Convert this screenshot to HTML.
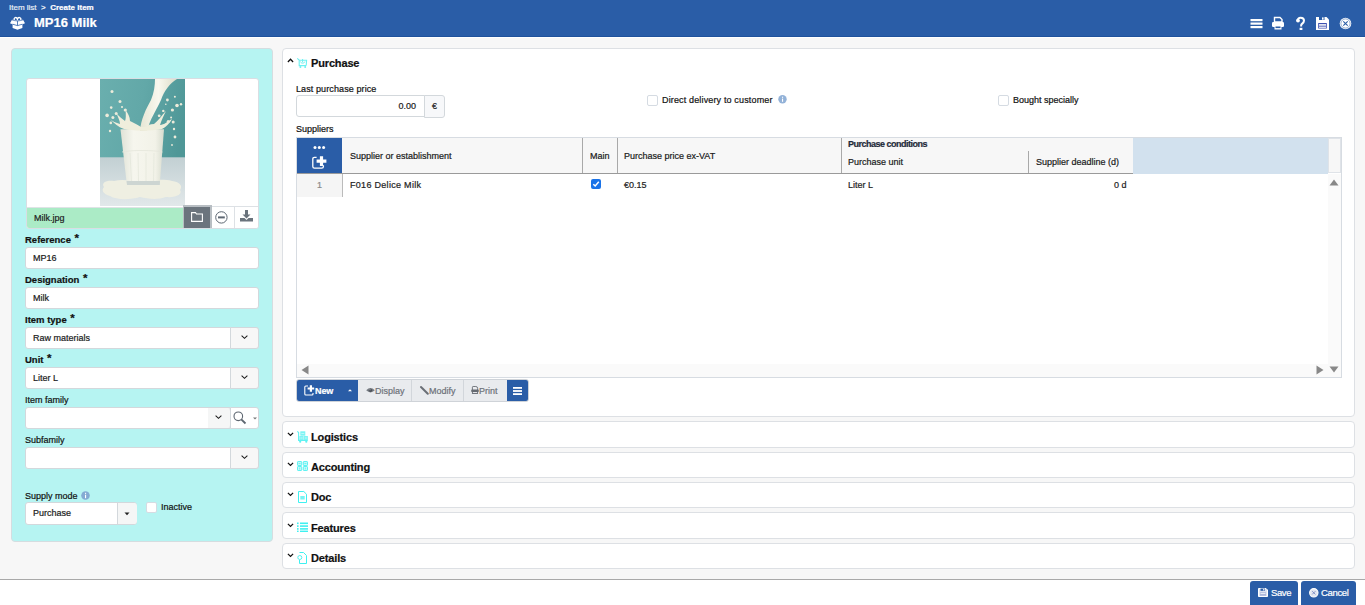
<!DOCTYPE html>
<html><head><meta charset="utf-8">
<style>
*{box-sizing:border-box;margin:0;padding:0}
.a{-webkit-text-stroke:0.2px currentColor}
html,body{width:1365px;height:605px;overflow:hidden;background:#f7f7f7;font-family:"Liberation Sans",sans-serif;color:#1a1a1a;position:relative}
.a{position:absolute}
svg{position:absolute;overflow:visible}
.hdr{left:0;top:0;width:1365px;height:37px;background:#2a5da7;border-bottom:1px solid #1f529c}
.hdrw{left:0;top:37px;width:1365px;height:1px;background:#fff}
.bc{left:9px;top:2px;font-size:8px;line-height:12px;color:#fff;white-space:nowrap}
.title{left:34px;top:15px;font-size:13px;line-height:16px;font-weight:bold;color:#fff;white-space:nowrap}
.lp{left:11px;top:48px;width:262px;height:494px;background:#b6f4f2;border:1px solid #d5dde0;border-radius:4px}
.imgbox{left:26px;top:78px;width:233px;height:151px;background:#fff;border:1px solid #d9dee3;border-radius:3px;overflow:hidden}
.lbl{margin-top:0.5px;font-size:9px;line-height:11px;white-space:nowrap;color:#111}
.lb{margin-top:1px !important;font-size:9.5px;font-weight:bold;letter-spacing:0px}
.inp{background:#fff;border:1px solid #d3d8dc;border-radius:3px;font-size:9px;line-height:20px;color:#1a1a1a;white-space:nowrap;padding-left:7px;padding-top:0px}
.ddb{position:absolute;top:-1px;height:22px;background:#f7f7f7;border:1px solid #d3d8dc;border-radius:0 3px 3px 0}
.panel{left:282px;width:1073px;background:#fff;border:1px solid #dde0e4;border-radius:4px}
.ptitle{margin-top:0.5px;letter-spacing:-0.15px;font-size:11px;line-height:13px;font-weight:bold;color:#111;white-space:nowrap}
.t9{margin-top:0.5px;font-size:9px;line-height:11px;white-space:nowrap;color:#111}
.cb{width:11px;height:11px;border:1px solid #d5dbe2;border-radius:2px;background:#fff}
.th{margin-top:0.5px;font-size:9px;line-height:11px;white-space:nowrap;color:#1a1a1a}
.btn{background:#e9ebee;border-right:1px solid #d2d6db;color:#7a7f86;font-size:9px;line-height:22px;white-space:nowrap}
</style></head><body>
<!-- HEADER -->
<div class="a hdr"></div>
<div class="a hdrw"></div>
<div class="a bc"><span style="color:#e8eef6">Item list</span>&nbsp;&nbsp;&gt;&nbsp;&nbsp;<b>Create Item</b></div>
<svg style="left:10px;top:16px" width="15" height="14" viewBox="0 0 15 14">
  <path d="M4.2 4.2 C3.6 1.2 6.6 0.4 7.4 3.4 C8.2 0.4 11.4 1.2 10.8 4.2" stroke="#fff" stroke-width="1.3" fill="none"/>
  <path d="M7.5 4.4 L2 3.8 L0 7.2 L2.6 8.2 L2.6 12 L7.5 13.8 L12.4 12 L12.4 8.2 L15 7.2 L13 3.8 Z" fill="#fff"/>
  <path d="M2.6 8.2 L7.5 9.6 L12.4 8.2 M7.5 4.6 L7.5 9.6" stroke="#2a5da7" stroke-width="0.8" fill="none"/>
  <path d="M2.2 4.2 L7.2 5 M12.8 4.2 L7.8 5" stroke="#2a5da7" stroke-width="0.6" fill="none"/>
</svg>
<div class="a title">MP16 Milk</div>
<!-- header icons -->
<svg style="left:1250px;top:18px" width="13" height="11" viewBox="0 0 13 11">
  <rect x="0.5" y="1" width="12" height="2.2" fill="#fff"/><rect x="0.5" y="4.5" width="12" height="2.2" fill="#fff"/><rect x="0.5" y="8" width="12" height="2.2" fill="#fff"/>
</svg>
<svg style="left:1272px;top:17px" width="12" height="13" viewBox="0 0 12 13">
  <path d="M2.5 0.5 H8 L10 2.5 V5 H2.5 Z" fill="none" stroke="#fff" stroke-width="1.4"/>
  <rect x="0" y="5" width="12" height="5" rx="1.2" fill="#fff"/>
  <rect x="2.5" y="8.5" width="7" height="4" fill="#fff"/><rect x="3.5" y="9.5" width="5" height="1.6" fill="#2a5da7"/>
</svg>
<svg style="left:1296px;top:17px" width="9" height="13" viewBox="0 0 9 13"><path d="M1.6 4.2 C1.2 1.8 2.8 0.8 4.6 0.8 C6.8 0.8 8 2 8 3.8 C8 5.6 6.6 6.4 5.6 7.2 C5.2 7.6 5.1 8 5.1 9.4" stroke="#fff" stroke-width="2" fill="none"/><circle cx="2" cy="3.6" r="1.9" fill="#fff"/><rect x="3.6" y="10.8" width="2.8" height="2.2" fill="#fff"/></svg>
<svg style="left:1316px;top:17px" width="13" height="13" viewBox="0 0 13 13">
  <path d="M0 0 H10.5 L13 2.5 V13 H0 Z" fill="#fff"/>
  <rect x="3" y="0" width="5.5" height="3" fill="#2a5da7"/><rect x="6" y="0.4" width="1.6" height="2.3" fill="#fff"/>
  <rect x="2.2" y="6" width="8.6" height="5.5" fill="#3d4fb0"/><rect x="3" y="7" width="7" height="1.8" fill="#dfe3ee"/><rect x="3" y="9.6" width="7" height="1.2" fill="#fff"/>
</svg>
<svg style="left:1339px;top:17px" width="13" height="13" viewBox="0 0 13 13">
  <circle cx="6.5" cy="6.5" r="5.8" fill="#fff"/><circle cx="6.5" cy="6.5" r="4.6" fill="none" stroke="#2a5da7" stroke-width="0.5"/>
  <path d="M4.3 4.3 L8.7 8.7 M8.7 4.3 L4.3 8.7" stroke="#2a5da7" stroke-width="1.1"/>
</svg>

<!-- LEFT PANEL -->
<div class="a lp"></div>
<div class="a imgbox">
  <svg style="left:73px;top:0" width="85" height="127" viewBox="0 0 85 127">
    <defs>
      <linearGradient id="bg" x1="0" y1="0" x2="1" y2="0.3"><stop offset="0" stop-color="#6aafae"/><stop offset="0.5" stop-color="#62a8a8"/><stop offset="1" stop-color="#4f9797"/></linearGradient>
      <linearGradient id="tb" x1="0" y1="0" x2="0" y2="1"><stop offset="0" stop-color="#c2d0d3"/><stop offset="1" stop-color="#e2e8ea"/></linearGradient>
      <linearGradient id="gl" x1="0" y1="0" x2="1" y2="0"><stop offset="0" stop-color="#dfe2d6"/><stop offset="0.3" stop-color="#f6f6ee"/><stop offset="0.8" stop-color="#f2f2e8"/><stop offset="1" stop-color="#d8dccf"/></linearGradient>
      <linearGradient id="st" x1="0" y1="0" x2="1" y2="0"><stop offset="0" stop-color="#e6e6d4"/><stop offset="0.5" stop-color="#f8f8ee"/><stop offset="1" stop-color="#dcdcc8"/></linearGradient>
    </defs>
    <rect width="85" height="127" fill="url(#bg)"/>
    <rect y="78.3" width="85" height="48.7" fill="url(#tb)"/>
    <path d="M4 108 C1 104 6 101 14 102 C22 100 30 102 42 102 C54 101 64 100 72 102 C80 103 83 107 80 111 C83 115 76 119 66 118 C58 121 48 120 40 118 C30 121 16 121 10 117 C3 115 1 111 4 108 Z" fill="#efefe2"/>
    <path d="M20.5 50.2 L64 50.2 L59.8 105 L26.8 105 Z" fill="url(#gl)"/>
    <g stroke="#e3e5da" stroke-width="0.7"><path d="M30 74 L31.5 103"/><path d="M38 74 L38.5 103"/><path d="M46 74 L46 103"/><path d="M54 74 L53.5 103"/></g>
    <path d="M22 73 C30 71 54 71 62.5 73" stroke="#e4e6da" stroke-width="0.8" fill="none"/>
    <path d="M26.5 102 L60 102 L59.8 106 L27 106 Z" fill="#cdd5d2"/>
    <path d="M40 52 C41 40 46 30 51 21 C54 14 55 6 55 0 L77 0 C70 4 64 12 61 21 C56 32 50 40 47 52 Z" fill="url(#st)"/>
    <path d="M10 40 C14 44 18 48 24 50 C32 52 52 52 62 50 C66 48 70 44 72 40 C68 42 64 46 60 46 C62 40 64 36 66 32 C62 36 58 42 54 45 C50 45 48 46 46 48 L41 48 C38 46 34 44 30 42 C30 38 28 34 25.5 31 C26 36 26 40 25 42 C22 40 19 37 16.5 34.5 C18 38 20 42 20 45 C16 44 12 42 10 40 Z" fill="#efeedc"/>
    <g fill="#ecebda"><circle cx="25.3" cy="31" r="1.6"/><circle cx="16.2" cy="34.4" r="1.5"/><circle cx="12.9" cy="38.5" r="1.5"/><circle cx="72.4" cy="31" r="1.6"/><circle cx="59.2" cy="36.8" r="1.4"/><circle cx="68.2" cy="42.6" r="1.5"/>
    <circle cx="12" cy="12.5" r="1.5"/><circle cx="20" cy="22.4" r="1.5"/><circle cx="11.2" cy="28.6" r="1.3"/><circle cx="22" cy="28" r="1.1"/><circle cx="7.1" cy="36.4" r="1.8"/><circle cx="10.8" cy="43.9" r="1.3"/><circle cx="67.4" cy="21" r="1.4"/><circle cx="74.9" cy="17.8" r="1"/><circle cx="77" cy="26.5" r="1.8"/><circle cx="81" cy="25.3" r="1.2"/><circle cx="65.8" cy="25.3" r="0.8"/><circle cx="63.3" cy="31.9" r="1.2"/><circle cx="73.2" cy="43" r="1.5"/><circle cx="71.1" cy="38.5" r="1"/><circle cx="10" cy="52" r="1.2"/><circle cx="74" cy="50" r="1.2"/><circle cx="75" cy="58" r="1.4"/><circle cx="72" cy="66" r="0.9"/></g>
  </svg>
  <div class="a" style="left:0;top:128px;width:157px;height:22px;background:#abebc6;border-top:1px solid #dfe3e6;font-size:9px;line-height:21px;color:#222;padding-left:7px">Milk.jpg</div>
  <div class="a" style="left:156px;top:126px;width:29px;height:24px;background:#6b747d;border:solid #b8bec3;border-width:2px 2px 0 1px"></div>
  <svg style="left:164px;top:133px" width="12" height="10" viewBox="0 0 12 10"><path d="M0.6 0.6 H4.5 L5.5 2 H11.4 V9.4 H0.6 Z" fill="none" stroke="#fff" stroke-width="1.1"/></svg>
  <div class="a" style="left:185px;top:127px;width:47px;height:1px;background:#dde1e5"></div><div class="a" style="left:185px;top:128px;width:23px;height:22px;background:#fff"></div>
  <svg style="left:188px;top:132px" width="13" height="13" viewBox="0 0 13 13"><circle cx="6.4" cy="6.4" r="5.7" fill="none" stroke="#5d6772" stroke-width="1"/><rect x="3" y="5.4" width="6.8" height="2" fill="#5d6772"/></svg>
  <div class="a" style="left:207px;top:128px;width:25px;height:22px;background:#fff;border-left:1px solid #dde1e5"></div>
  <svg style="left:213px;top:131px" width="13" height="12" viewBox="0 0 13 12"><path d="M5 0 H8 V4.5 H10.5 L6.5 8.5 L2.5 4.5 H5 Z" fill="#6a737c"/><path d="M0 8 H4.5 L6.5 10 L8.5 8 H13 V11.5 H0 Z" fill="#6a737c"/></svg>
</div>

<div class="a lbl lb" style="left:25px;top:233px">Reference <span style="position:relative;top:-1px;margin-left:1px;font-size:11.5px;line-height:10px">*</span></div>
<div class="a inp" style="left:25px;top:247px;width:234px;height:22px">MP16</div>
<div class="a lbl lb" style="left:25px;top:273px">Designation <span style="position:relative;top:-1px;margin-left:1px;font-size:11.5px;line-height:10px">*</span></div>
<div class="a inp" style="left:25px;top:287px;width:234px;height:22px">Milk</div>
<div class="a lbl lb" style="left:25px;top:313px">Item type <span style="position:relative;top:-1px;margin-left:1px;font-size:11.5px;line-height:10px">*</span></div>
<div class="a inp" style="left:25px;top:327px;width:234px;height:22px">Raw materials<div class="ddb" style="left:204px;width:29px"></div></div>
<svg style="left:241px;top:335px" width="7" height="4" viewBox="0 0 7 4"><path d="M0.6 0.6 L3.5 3.3 L6.4 0.6" stroke="#1a1a1a" stroke-width="1.05" fill="none"/></svg>
<div class="a lbl lb" style="left:25px;top:353px">Unit <span style="position:relative;top:-1px;margin-left:1px;font-size:11.5px;line-height:10px">*</span></div>
<div class="a inp" style="left:25px;top:367px;width:234px;height:22px">Liter L<div class="ddb" style="left:204px;width:29px"></div></div>
<svg style="left:241px;top:375px" width="7" height="4" viewBox="0 0 7 4"><path d="M0.6 0.6 L3.5 3.3 L6.4 0.6" stroke="#1a1a1a" stroke-width="1.05" fill="none"/></svg>
<div class="a lbl" style="left:25px;top:394px">Item family</div>
<div class="a inp" style="left:25px;top:407px;width:206px;height:22px;border-radius:3px 0 0 3px"><div class="ddb" style="left:182px;width:23px;border:none;border-right:1px solid #d3d8dc;top:0;height:20px;background:#f5f6f6"></div></div>
<svg style="left:215px;top:415px" width="7" height="4" viewBox="0 0 7 4"><path d="M0.6 0.6 L3.5 3.3 L6.4 0.6" stroke="#1a1a1a" stroke-width="1.05" fill="none"/></svg>
<div class="a inp" style="left:230px;top:407px;width:29px;height:22px;border-radius:0 3px 3px 0"></div>
<svg style="left:233px;top:411px" width="14" height="14" viewBox="0 0 14 14"><circle cx="5.3" cy="5.3" r="4.3" fill="none" stroke="#5d6670" stroke-width="1.1"/><path d="M8.3 8.3 L12.5 12.5" stroke="#5d6670" stroke-width="1.8"/></svg>
<svg style="left:252.5px;top:416.5px" width="4" height="3" viewBox="0 0 4 3"><path d="M0 0.5 H4 L2 2.5 Z" fill="#777"/></svg>
<div class="a lbl" style="left:25px;top:434px">Subfamily</div>
<div class="a inp" style="left:25px;top:447px;width:234px;height:22px"><div class="ddb" style="left:204px;width:29px"></div></div>
<svg style="left:241px;top:455px" width="7" height="4" viewBox="0 0 7 4"><path d="M0.6 0.6 L3.5 3.3 L6.4 0.6" stroke="#1a1a1a" stroke-width="1.05" fill="none"/></svg>

<div class="a lbl" style="left:25px;top:490px">Supply mode</div>
<svg style="left:81px;top:491px" width="9" height="9" viewBox="0 0 9 9"><circle cx="4.5" cy="4.5" r="4.3" fill="#84abd3"/><rect x="4" y="3.7" width="1.1" height="3.5" fill="#fff"/><rect x="4" y="1.8" width="1.1" height="1.1" fill="#fff"/></svg>
<div class="a inp" style="left:25px;top:502px;width:112px;height:23px;line-height:21px">Purchase<div class="ddb" style="left:91px;width:20px;height:23px;background:#f5f6f6;border-left:1px solid #d3d8dc;border-top:none;border-bottom:none;border-right:none;top:0;height:21px"></div></div>
<svg style="left:124px;top:512px" width="6" height="4" viewBox="0 0 6 4"><path d="M0.5 0.5 H5.5 L3 3.2 Z" fill="#222"/></svg>
<div class="a cb" style="left:146px;top:502px"></div>
<div class="a lbl" style="left:161px;top:501px">Inactive</div>

<!-- PURCHASE PANEL -->
<div class="a panel" style="top:48px;height:369px"></div>
<svg style="left:287px;top:58px" width="7" height="5" viewBox="0 0 7 5"><path d="M0.9 4 L3.5 1.3 L6.1 4" stroke="#111" stroke-width="1.3" fill="none"/></svg>
<svg style="left:297px;top:58px" width="10" height="10" viewBox="0 0 10 10">
  <path d="M0.3 0.3 L2.2 2.2 V7.6 H9" stroke="#6cf1f1" stroke-width="1.1" fill="none"/>
  <path d="M2.2 2.2 H9.6 L9.2 7.6" stroke="#6cf1f1" stroke-width="1.1" fill="none"/>
  <path d="M3.4 3.6 C4 5.6 7.2 5.6 8 3.6 M5.6 1 V4.2" stroke="#6cf1f1" stroke-width="1" fill="none"/>
  <circle cx="3.4" cy="9" r="1" fill="#6cf1f1"/><circle cx="8.2" cy="9" r="1" fill="#6cf1f1"/>
</svg>
<div class="a ptitle" style="left:311px;top:56px">Purchase</div>
<div class="a t9" style="left:296px;top:83px;letter-spacing:0.1px">Last purchase price</div>
<div class="a inp" style="left:296px;top:95px;width:129px;height:22px;border-radius:3px 0 0 3px;text-align:right;padding-right:8px">0.00</div>
<div class="a" style="left:424px;top:95px;width:21px;height:23px;background:#f7f8fa;border:1px solid #d3d8dc;border-radius:0 3px 3px 0;font-size:9px;line-height:21px;text-align:center;color:#222">€</div>
<div class="a cb" style="left:647px;top:95px"></div>
<div class="a t9" style="left:662px;top:94px;letter-spacing:0.15px">Direct delivery to customer</div>
<svg style="left:778px;top:95px" width="9" height="9" viewBox="0 0 9 9"><circle cx="4.5" cy="4.3" r="4.2" fill="#93b2d8"/><rect x="4" y="3.6" width="1.1" height="3.2" fill="#fff"/><rect x="4" y="1.7" width="1.1" height="1.1" fill="#fff"/></svg>
<div class="a cb" style="left:998px;top:95px"></div>
<div class="a t9" style="left:1013px;top:94px">Bought specially</div>
<div class="a t9" style="left:296px;top:123px">Suppliers</div>

<!-- TABLE -->
<div class="a" style="left:296px;top:137px;width:1046px;height:241px;background:#fff;border:1px solid #d7dce2"></div>
<div class="a" style="left:297px;top:138px;width:1031px;height:35px;background:#f7f7f7"></div>
<div class="a" style="left:1133px;top:138px;width:195px;height:36px;background:#d2e1ee"></div>
<div class="a" style="left:297px;top:173px;width:836px;height:1px;background:#9a9a9a"></div>
<div class="a" style="left:297px;top:138px;width:45px;height:35px;background:#2a5da7"></div>
<svg style="left:313px;top:146px" width="13" height="4" viewBox="0 0 13 4"><circle cx="2" cy="1.6" r="1.5" fill="#fff"/><circle cx="6.3" cy="1.6" r="1.5" fill="#fff"/><circle cx="10.6" cy="1.6" r="1.5" fill="#fff"/></svg>
<svg style="left:312px;top:156px" width="15" height="13" viewBox="0 0 15 13"><path d="M4.6 1.3 H2.4 Q0.8 1.3 0.8 2.9 V10.6 Q0.8 12.2 2.4 12.2 H9.8 Q11.4 12.2 11.4 10.6 V9.2" stroke="#fff" stroke-width="1.3" fill="none"/><path d="M7.9 0.2 H11.1 V3.5 H14.4 V6.7 H11.1 V10 H7.9 V6.7 H4.6 V3.5 H7.9 Z" fill="#fff"/></svg>
<div class="a" style="left:582px;top:138px;width:1px;height:35px;background:#a9a9a9"></div>
<div class="a" style="left:617px;top:138px;width:1px;height:35px;background:#a9a9a9"></div>
<div class="a" style="left:841px;top:138px;width:1px;height:35px;background:#a9a9a9"></div>
<div class="a" style="left:1028px;top:151px;width:1px;height:22px;background:#a9a9a9"></div>
<div class="a th" style="left:350px;top:150px">Supplier or establishment</div>
<div class="a th" style="left:590px;top:150px">Main</div>
<div class="a th" style="left:624px;top:150px">Purchase price ex-VAT</div>
<div class="a th" style="left:848px;top:138px;font-weight:bold;letter-spacing:-0.5px;color:#1f2a3a">Purchase conditions</div>
<div class="a th" style="left:848px;top:156px">Purchase unit</div>
<div class="a th" style="left:1036px;top:156px">Supplier deadline (d)</div>
<!-- scroll col -->
<div class="a" style="left:1328px;top:138px;width:13px;height:35px;background:#f7f7f7;border:1px solid #dfe3e8"></div>
<div class="a" style="left:1328px;top:174px;width:13px;height:190px;background:#fafafa"></div>
<svg style="left:1329px;top:179px" width="10" height="7" viewBox="0 0 10 7"><path d="M5 0.5 L9.5 6.5 H0.5 Z" fill="#888"/></svg>
<!-- row 1 -->
<div class="a" style="left:297px;top:174px;width:45px;height:23px;background:#f5f5f5"></div>
<div class="a" style="left:342px;top:174px;width:1px;height:23px;background:#bbb"></div>
<div class="a th" style="left:317px;top:179px;color:#8a8a8a">1</div>
<div class="a th" style="left:350px;top:179px;color:#222;letter-spacing:0.3px">F016 Delice Milk</div>
<div class="a" style="left:591px;top:179px;width:10px;height:10px;background:#1a73e8;border-radius:2px"></div>
<svg style="left:592px;top:180px" width="8" height="8" viewBox="0 0 8 8"><path d="M1.3 4.2 L3.2 6 L6.8 1.8" stroke="#fff" stroke-width="1.5" fill="none"/></svg>
<div class="a th" style="left:624px;top:179px;color:#222">€0.15</div>
<div class="a th" style="left:848px;top:179px;color:#222">Liter L</div>
<div class="a th" style="left:1114px;top:179px;color:#222">0 d</div>
<!-- h scrollbar -->
<div class="a" style="left:297px;top:364px;width:1044px;height:13px;background:#fafafa"></div>
<svg style="left:301px;top:365px" width="8" height="10" viewBox="0 0 8 10"><path d="M7.5 0.5 V9.5 L0.5 5 Z" fill="#888"/></svg>
<svg style="left:1316px;top:365px" width="8" height="10" viewBox="0 0 8 10"><path d="M0.5 0.5 V9.5 L7.5 5 Z" fill="#888"/></svg>
<svg style="left:1329px;top:366px" width="10" height="7" viewBox="0 0 10 7"><path d="M0.5 0.5 H9.5 L5 6.5 Z" fill="#888"/></svg>

<!-- toolbar -->
<div class="a" style="left:296px;top:379px;width:233px;height:23px;border-radius:3px;overflow:hidden;background:#e9ebee;border:1px solid #cfd3d8">
  <div class="a" style="left:-1px;top:-1px;width:62px;height:23px;background:#2a5da7"></div>
  <div class="a" style="left:9px;top:1px;font-size:9px;line-height:21px;font-weight:bold;color:#fff;letter-spacing:-0.1px;padding-left:9px">New</div>
  <div class="a" style="left:210px;top:-1px;width:23px;height:23px;background:#2a5da7"></div>
</div>
<svg style="left:304px;top:385px" width="12" height="11" viewBox="0 0 12 11"><path d="M4 1 H1.8 Q0.8 1 0.8 2 V9 Q0.8 10 1.8 10 H8 Q9 10 9 9 V8" stroke="#fff" stroke-width="1.1" fill="none"/><path d="M5.8 0.2 H8 V2.4 H10.2 V4.6 H8 V6.8 H5.8 V4.6 H3.6 V2.4 H5.8 Z" fill="#fff"/></svg>
<svg style="left:348px;top:389px" width="4" height="3" viewBox="0 0 4 3"><path d="M0 2.2 L2 0.2 L4 2.2 Z" fill="#fff"/></svg>
<div class="a" style="left:411px;top:380px;width:1px;height:21px;background:#d2d6db"></div>
<div class="a" style="left:463px;top:380px;width:1px;height:21px;background:#d2d6db"></div>
<svg style="left:366px;top:387px" width="9" height="7" viewBox="0 0 9 7"><path d="M0.2 3.3 Q4.5 -1.2 8.8 3.3 Q4.5 7.6 0.2 3.3 Z" fill="#777c83"/><circle cx="4.5" cy="3.3" r="1.6" fill="#4a4f56"/><circle cx="4" cy="2.8" r="0.5" fill="#ddd"/></svg>
<div class="a" style="left:375px;top:381px;font-size:9px;line-height:21px;color:#6d7279">Display</div>
<svg style="left:420px;top:386px" width="9" height="9" viewBox="0 0 9 9"><path d="M1 1 L7.8 7.8" stroke="#6a6f76" stroke-width="2" stroke-linecap="round"/></svg>
<div class="a" style="left:429px;top:381px;font-size:9px;line-height:21px;color:#6d7279">Modify</div>
<svg style="left:471px;top:386px" width="8" height="8" viewBox="0 0 8 8"><path d="M1.4 4 V1.2 Q1.4 0.5 2.1 0.5 H4.8 Q6.6 0.5 6.6 2.3 V4" stroke="#666b72" stroke-width="0.9" fill="none"/><rect x="0.2" y="3.6" width="7.6" height="2.4" rx="0.8" fill="#666b72"/><rect x="1.4" y="5.6" width="5.2" height="1.9" fill="none" stroke="#666b72" stroke-width="0.9"/></svg>
<div class="a" style="left:479px;top:381px;font-size:9px;line-height:21px;color:#6d7279">Print</div>
<svg style="left:513px;top:387px" width="9" height="8" viewBox="0 0 9 8"><rect x="0" y="0" width="9" height="1.8" fill="#fff"/><rect x="0" y="3.1" width="9" height="1.8" fill="#fff"/><rect x="0" y="6.2" width="9" height="1.8" fill="#fff"/></svg>

<!-- COLLAPSED PANELS -->
<div class="a panel" style="top:421px;height:27px"></div>
<div class="a panel" style="top:452px;height:26px"></div>
<div class="a panel" style="top:482px;height:26px"></div>
<div class="a panel" style="top:512px;height:27px"></div>
<div class="a panel" style="top:543px;height:26px"></div>

<svg style="left:287px;top:432px" width="7" height="5" viewBox="0 0 7 5"><path d="M0.9 0.9 L3.5 3.4 L6.1 0.9" stroke="#111" stroke-width="1.3" fill="none"/></svg>
<svg style="left:297px;top:431px" width="11" height="12" viewBox="0 0 11 12"><path d="M0.3 0.3 L1.6 1.6 V9.4 H10.8" stroke="#5ef2f2" stroke-width="1.1" fill="none"/><rect x="3.3" y="0.3" width="5" height="4.4" fill="#7df4f4"/><rect x="2.4" y="5" width="4.2" height="4" fill="#7df4f4"/><rect x="6.9" y="5" width="4" height="4" fill="#7df4f4"/><path d="M4.3 2.5 H7.3 M3.4 7 H5.6 M7.9 7 H9.9" stroke="#d8fbfb" stroke-width="0.7"/><circle cx="3.2" cy="10.7" r="1.1" fill="#5ef2f2"/><circle cx="9.3" cy="10.7" r="1.1" fill="#5ef2f2"/></svg>
<div class="a ptitle" style="left:311px;top:430px">Logistics</div>

<svg style="left:287px;top:462px" width="7" height="5" viewBox="0 0 7 5"><path d="M0.9 0.9 L3.5 3.4 L6.1 0.9" stroke="#111" stroke-width="1.3" fill="none"/></svg>
<svg style="left:297px;top:461px" width="11" height="10" viewBox="0 0 11 10"><g fill="#c6f9f9" stroke="#5ef2f2" stroke-width="1"><rect x="0.5" y="0.5" width="4.2" height="4" rx="0.6"/><rect x="6.3" y="0.5" width="4.2" height="4" rx="0.6"/><rect x="0.5" y="5.5" width="4.2" height="4" rx="0.6"/><rect x="6.3" y="5.5" width="4.2" height="4" rx="0.6"/></g><path d="M1.6 2.5 H3.6 M7.4 2.5 H9.4 M2.6 6.6 V8.4 M8.4 6.6 V8.4" stroke="#5ef2f2" stroke-width="0.8"/></svg>
<div class="a ptitle" style="left:311px;top:460px">Accounting</div>

<svg style="left:287px;top:492px" width="7" height="5" viewBox="0 0 7 5"><path d="M0.9 0.9 L3.5 3.4 L6.1 0.9" stroke="#111" stroke-width="1.3" fill="none"/></svg>
<svg style="left:298px;top:491px" width="9" height="12" viewBox="0 0 9 12"><path d="M0.5 0.5 H5.8 L8.5 3.2 V11.5 H0.5 Z" fill="none" stroke="#3ff0f0" stroke-width="1"/><rect x="2.3" y="5" width="4.4" height="3.5" fill="#3ff0f0" opacity="0.7"/></svg>
<div class="a ptitle" style="left:311px;top:490px">Doc</div>

<svg style="left:287px;top:523px" width="7" height="5" viewBox="0 0 7 5"><path d="M0.9 0.9 L3.5 3.4 L6.1 0.9" stroke="#111" stroke-width="1.3" fill="none"/></svg>
<svg style="left:297px;top:522px" width="11" height="10" viewBox="0 0 11 10"><g fill="#3ff0f0"><rect x="0" y="0.5" width="1.6" height="1.6"/><rect x="3" y="0.5" width="8" height="1.6"/><rect x="0" y="3.3" width="1.6" height="1.6"/><rect x="3" y="3.3" width="8" height="1.6"/><rect x="0" y="6.1" width="1.6" height="1.6"/><rect x="3" y="6.1" width="8" height="1.6"/><rect x="0" y="8.6" width="1.6" height="1.4"/><rect x="3" y="8.6" width="8" height="1.4"/></g></svg>
<div class="a ptitle" style="left:311px;top:521px">Features</div>

<svg style="left:287px;top:553px" width="7" height="5" viewBox="0 0 7 5"><path d="M0.9 0.9 L3.5 3.4 L6.1 0.9" stroke="#111" stroke-width="1.3" fill="none"/></svg>
<svg style="left:297px;top:552px" width="10" height="12" viewBox="0 0 10 12"><path d="M2.5 0.5 H6.5 L9.5 3.5 V11.5 H2.5 V8" fill="none" stroke="#3ff0f0" stroke-width="1"/><circle cx="2.8" cy="5.5" r="2" fill="none" stroke="#3ff0f0" stroke-width="0.9"/></svg>
<div class="a ptitle" style="left:311px;top:551px">Details</div>

<!-- FOOTER -->
<div class="a" style="left:0;top:579px;width:1365px;height:26px;background:#fff;border-top:1px solid #a9a9a9"></div>
<div class="a" style="left:1250px;top:581px;width:48px;height:24px;background:#2a5da7;border-radius:3px 3px 0 0"></div>
<svg style="left:1258px;top:588px" width="10" height="9" viewBox="0 0 10 9"><path d="M0.5 0.5 H8 L9.5 2 V8.5 H0.5 Z" fill="#dfe4f1" stroke="#fff" stroke-width="1"/><rect x="2.5" y="0.5" width="4.5" height="2.3" fill="#2a5da7"/><rect x="5.2" y="0.8" width="1.2" height="1.7" fill="#fff"/><rect x="2" y="4.3" width="6" height="3.5" fill="#aeb9dc"/><rect x="2.5" y="5" width="5" height="1" fill="#e8ecf6"/></svg>
<div class="a" style="left:1271px;top:587px;font-size:9.5px;line-height:12px;color:#fff;letter-spacing:-0.4px">Save</div>
<div class="a" style="left:1301px;top:581px;width:55px;height:24px;background:#2a5da7;border-radius:3px 3px 0 0"></div>
<svg style="left:1309px;top:588px" width="10" height="10" viewBox="0 0 10 10"><circle cx="4.8" cy="4.8" r="4.2" fill="#e3e7f0" stroke="#fff" stroke-width="1.1"/><path d="M3.2 3.2 L6.4 6.4 M6.4 3.2 L3.2 6.4" stroke="#7b8bc4" stroke-width="0.9"/></svg>
<div class="a" style="left:1321px;top:587px;font-size:9.5px;line-height:12px;color:#fff;letter-spacing:-0.35px">Cancel</div>
</body></html>
